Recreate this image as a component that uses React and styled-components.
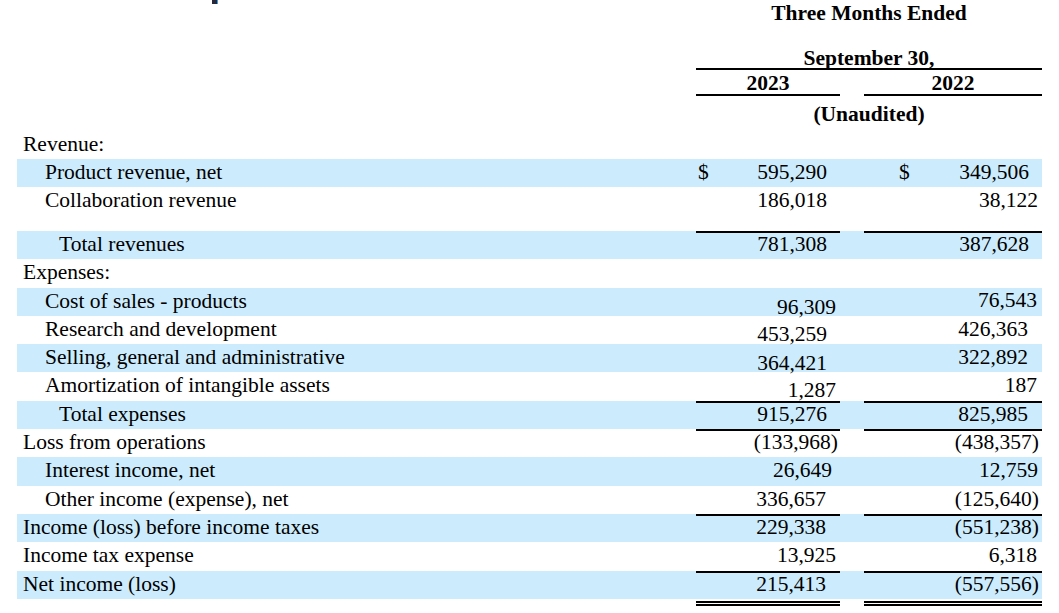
import React from 'react';
import styled, { createGlobalStyle } from 'styled-components';

const GlobalStyle = createGlobalStyle`
  body {
    margin: 0;
    background: #fff;
  }
`;

const Page = styled.div`
  width: 1059px;
  padding: 0 17px;
  box-sizing: border-box;
  font-family: "Liberation Serif", "Times New Roman", serif;
  font-size: 21.5px;
  color: #000;
`;

// header block
const HeadRow = styled.div`
  display: flex;
  height: ${(p) => p.$h}px;
  line-height: 26px;
`;

const HeadLabel = styled.div`
  flex: 1;
`;

const TopMark = styled.div`
  width: 5px;
  height: 4px;
  margin-left: 195px;
  background: #28283a;
  border-right: 1px solid #3a9ede;
`;

const HeadSpan = styled.div`
  width: 346px;
  box-sizing: border-box;
  height: ${(p) => p.$h}px;
  padding-top: ${(p) => p.$pt || 0}px;
  text-align: center;
  font-weight: bold;
  border-bottom: ${(p) => (p.$rule ? '2px solid #000' : 'none')};
`;

const HeadCell = styled.div`
  width: ${(p) => p.$w}px;
  box-sizing: border-box;
  height: 26px;
  text-align: center;
  font-weight: bold;
  border-bottom: 2px solid #000;
`;

const Gap = styled.div`
  width: 24px;
`;

// body rows
const Row = styled.div`
  display: flex;
  height: ${(p) => p.$h || 28.3}px;
  line-height: 26px;
  background: ${(p) => (p.$shade ? '#ccecfd' : 'transparent')};
`;

const Label = styled.div`
  flex: 1;
  white-space: nowrap;
  padding-left: ${(p) => [6, 28, 42][p.$level]}px;
`;

const Amount = styled.div`
  width: ${(p) => p.$w}px;
  display: flex;
  align-items: flex-start;
  white-space: nowrap;
  box-shadow: ${(p) => (p.$rule ? 'inset 0 2px 0 #000' : 'none')};
`;

const Dollar = styled.span`
  margin-left: ${(p) => p.$ml}px;
`;

const Value = styled.span`
  margin-left: auto;
  margin-top: ${(p) => p.$drop || 0}px;
  padding-right: ${(p) => p.$pr}px;
`;

const DoubleRule = styled.div`
  width: ${(p) => p.$w}px;
  height: 1px;
  margin-top: 2px;
  border-top: 2px solid #000;
  border-bottom: 2px solid #000;
`;

const rows = [
  { label: 'Revenue:', level: 0 },
  { label: 'Product revenue, net', level: 1, shade: true, a: { v: '595,290', pr: 13, dollar: 2 }, b: { v: '349,506', pr: 13, dollar: 35 } },
  { label: 'Collaboration revenue', level: 1, a: { v: '186,018', pr: 13 }, b: { v: '38,122', pr: 4 } },
  { spacer: true },
  { label: 'Total revenues', level: 2, shade: true, rule: true, a: { v: '781,308', pr: 13 }, b: { v: '387,628', pr: 13 } },
  { label: 'Expenses:', level: 0 },
  { label: 'Cost of sales - products', level: 1, shade: true, a: { v: '96,309', pr: 4, drop: 6 }, b: { v: '76,543', pr: 5, drop: -1 } },
  { label: 'Research and development', level: 1, a: { v: '453,259', pr: 13, drop: 5 }, b: { v: '426,363', pr: 14 } },
  { label: 'Selling, general and administrative', level: 1, shade: true, a: { v: '364,421', pr: 13, drop: 6 }, b: { v: '322,892', pr: 14 } },
  { label: 'Amortization of intangible assets', level: 1, a: { v: '1,287', pr: 4, drop: 5 }, b: { v: '187', pr: 5 } },
  { label: 'Total expenses', level: 2, shade: true, rule: true, a: { v: '915,276', pr: 13 }, b: { v: '825,985', pr: 14 } },
  { label: 'Loss from operations', level: 0, rule: true, a: { v: '(133,968)', pr: 2 }, b: { v: '(438,357)', pr: 3 } },
  { label: 'Interest income, net', level: 1, shade: true, a: { v: '26,649', pr: 8 }, b: { v: '12,759', pr: 4 } },
  { label: 'Other income (expense), net', level: 1, a: { v: '336,657', pr: 14 }, b: { v: '(125,640)', pr: 3 } },
  { label: 'Income (loss) before income taxes', level: 0, shade: true, rule: true, a: { v: '229,338', pr: 14 }, b: { v: '(551,238)', pr: 3 } },
  { label: 'Income tax expense', level: 0, a: { v: '13,925', pr: 4 }, b: { v: '6,318', pr: 5 } },
  { label: 'Net income (loss)', level: 0, shade: true, rule: true, a: { v: '215,413', pr: 14 }, b: { v: '(557,556)', pr: 3 } },
];

function AmountCell({ w, cell, rule }) {
  return (
    <Amount $w={w} $rule={rule}>
      {cell && cell.dollar !== undefined && <Dollar $ml={cell.dollar}>$</Dollar>}
      {cell && <Value $pr={cell.pr} $drop={cell.drop}>{cell.v}</Value>}
    </Amount>
  );
}

export default function App() {
  return (
    <Page>
      <GlobalStyle />

      <HeadRow $h={44.9}>
        <HeadLabel>
          <TopMark />
        </HeadLabel>
        <HeadSpan $h={26}>Three Months Ended</HeadSpan>
      </HeadRow>
      <HeadRow $h={25.4}>
        <HeadLabel />
        <HeadSpan $h={25.4} $rule>September 30,</HeadSpan>
      </HeadRow>
      <HeadRow $h={26}>
        <HeadLabel />
        <HeadCell $w={144}>2023</HeadCell>
        <Gap />
        <HeadCell $w={178}>2022</HeadCell>
      </HeadRow>
      <HeadRow $h={34.3}>
        <HeadLabel />
        <HeadSpan $h={34.3} $pt={4.4}>(Unaudited)</HeadSpan>
      </HeadRow>

      {rows.map((r, i) =>
        r.spacer ? (
          <Row key={i} $h={15.5} />
        ) : (
          <Row key={i} $shade={r.shade}>
            <Label $level={r.level}>{r.label}</Label>
            <AmountCell w={144} cell={r.a} rule={r.rule} />
            <Gap />
            <AmountCell w={178} cell={r.b} rule={r.rule} />
          </Row>
        )
      )}

      <Row $h={8}>
        <Label $level={0} />
        <DoubleRule $w={144} />
        <Gap />
        <DoubleRule $w={178} />
      </Row>
    </Page>
  );
}
